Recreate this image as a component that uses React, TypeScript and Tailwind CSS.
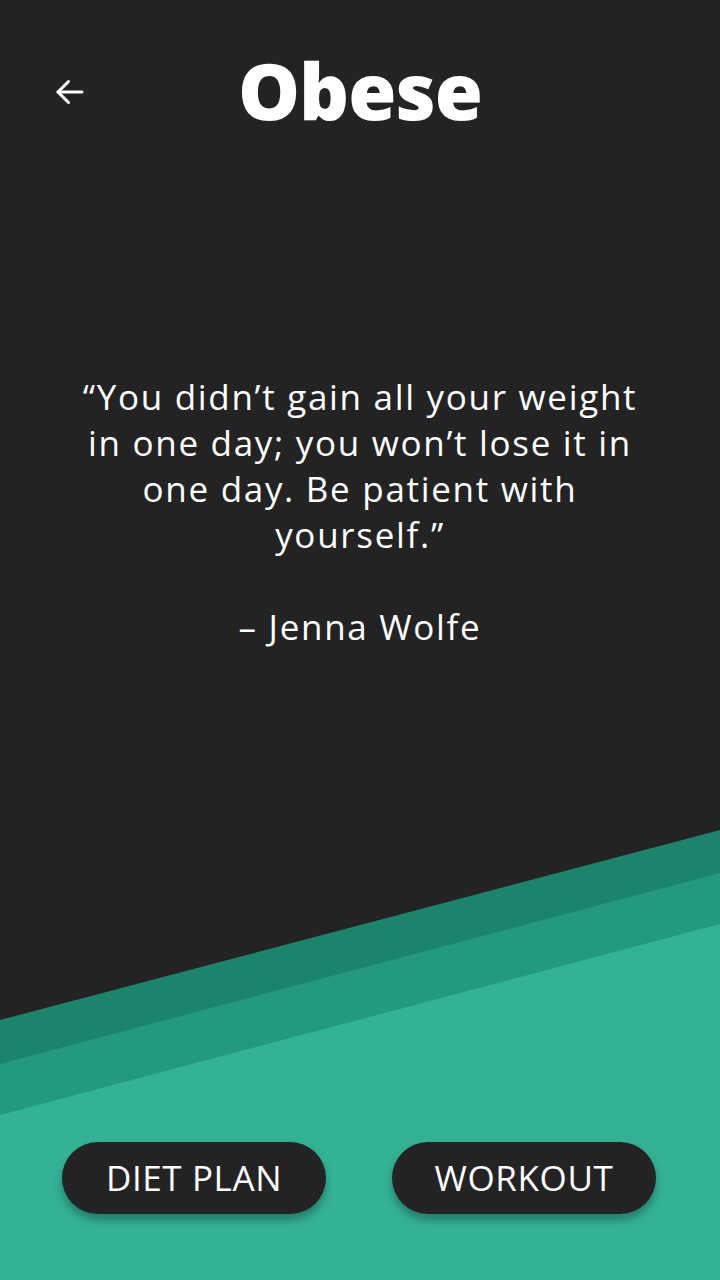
import React from "react";

function BackArrow() {
  return (
    <svg width="36" height="36" viewBox="0 0 24 24" fill="none" stroke="white" strokeWidth="2" strokeLinecap="round" strokeLinejoin="round">
      <path d="M20 12H4" />
      <path d="M11 5l-7 7 7 7" />
    </svg>
  );
}

export default function App() {
  return (
    <div className="relative w-[720px] h-[1280px] bg-[#232323] overflow-hidden flex flex-col" style={{ fontFamily: "'Open Sans', 'Liberation Sans', sans-serif" }}>
      <svg className="absolute inset-0" width="720" height="1280" viewBox="0 0 720 1280">
        <polygon points="0,1020 720,830 720,1280 0,1280" fill="#1b846a" />
        <polygon points="0,1064 720,873 720,1280 0,1280" fill="#239a7e" />
        <polygon points="0,1115 720,924 720,1280 0,1280" fill="#33b294" />
      </svg>
      <div className="relative flex items-center h-[184px] pb-0">
        <div className="absolute left-[52px] top-[74px]"><BackArrow /></div>
        <h1 className="w-full text-center text-white text-[78px] font-extrabold leading-none tracking-[-1px] -mt-[4px]">Obese</h1>
      </div>
      <div className="relative mt-[190px] text-center text-white text-[35px] leading-[46px] tracking-[1.7px]" style={{ fontFamily: "'Open Sans', Lato, sans-serif" }}>
        <p>“You didn’t gain all your weight<br />in one day; you won’t lose it in<br />one day. Be patient with<br />yourself.”</p>
        <p className="mt-[46px]">– Jenna Wolfe</p>
      </div>
      <div className="relative mt-auto mb-[66px] flex justify-between pl-[62px] pr-[64px]">
        <button className="w-[264px] h-[72px] rounded-full bg-[#232323] text-white text-[35px] tracking-[0.6px] shadow-[0_6px_8px_rgba(0,0,0,0.3)]">DIET PLAN</button>
        <button className="w-[264px] h-[72px] rounded-full bg-[#232323] text-white text-[35px] tracking-[0.6px] shadow-[0_6px_8px_rgba(0,0,0,0.3)]">WORKOUT</button>
      </div>
    </div>
  );
}
